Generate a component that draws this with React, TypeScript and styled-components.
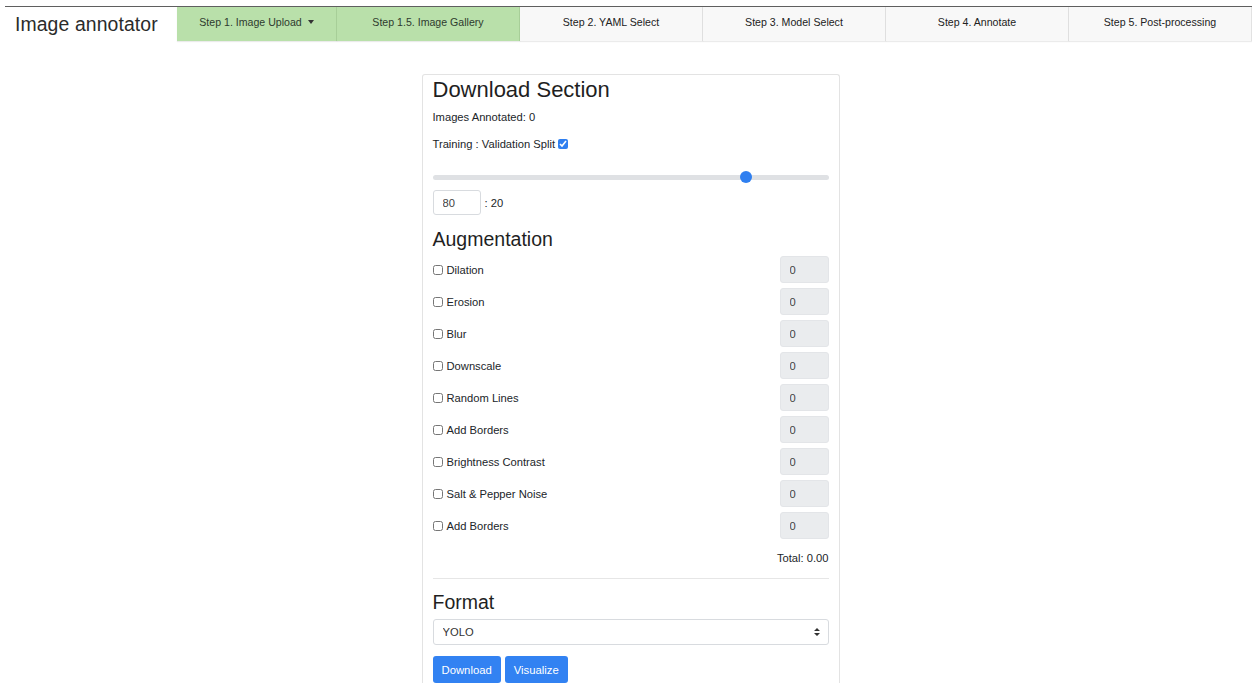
import React, { useState } from "react";
import styled, { createGlobalStyle } from "styled-components";

const GlobalStyle = createGlobalStyle`
  body {
    margin: 0;
    background: #ffffff;
    color: #212529;
    font-family: "Liberation Sans", Arial, sans-serif;
  }
  * { box-sizing: border-box; }
`;

const TopBar = styled.header`
  display: flex;
  align-items: stretch;
  margin: 6px 0 0 5px;
  border-top: 1px solid #5f5f5f;
  height: 35px;
`;

const Brand = styled.div`
  width: 172px;
  padding-left: 10px;
  display: flex;
  align-items: center;
  font-size: 19.4px;
  color: #2b2b2b;
  letter-spacing: 0.1px;
`;

const StepTab = styled.div<{ $done?: boolean; $first?: boolean }>`
  flex: ${({ $first }) => ($first ? "0 0 160px" : "1 1 0")};
  display: flex;
  align-items: center;
  justify-content: center;
  gap: 6px;
  padding-bottom: 4px;
  font-size: 10.6px;
  color: ${({ $done }) => ($done ? "#2e3a2e" : "#222")};
  background: ${({ $done }) => ($done ? "#b9e0aa" : "#f8f8f8")};
  border-right: 1px solid ${({ $done }) => ($done ? "#a9d19a" : "#e2e2e2")};
  box-shadow: 0 1px 1px rgba(0, 0, 0, 0.08);
`;

const Caret = styled.span`
  width: 0;
  height: 0;
  border-left: 3.5px solid transparent;
  border-right: 3.5px solid transparent;
  border-top: 4px solid #333;
`;

const Main = styled.main`
  display: flex;
  justify-content: center;
  padding: 33px 0 0 9px;
`;

const Card = styled.section`
  width: 418px;
  border: 1px solid #e3e3e3;
  border-bottom: none;
  border-radius: 3px 3px 0 0;
  padding: 2px 10px 0;
  display: flex;
  flex-direction: column;
`;

const Heading = styled.h3<{ $size: number; $gap: number }>`
  margin: ${({ $gap }) => $gap}px 0 0;
  font-size: ${({ $size }) => $size}px;
  line-height: 24px;
  font-weight: 500;
  color: #1f1f1f;
`;

const Line = styled.div<{ $gap: number }>`
  margin-top: ${({ $gap }) => $gap}px;
  font-size: 11.2px;
  line-height: 16px;
  display: flex;
  align-items: center;
  gap: 3px;
`;

const Check = styled.input.attrs({ type: "checkbox" })`
  width: 10px;
  height: 10px;
  margin: 0;
  accent-color: #2f7ff0;
`;

const Range = styled.input.attrs({ type: "range" })`
  -webkit-appearance: none;
  appearance: none;
  width: 100%;
  height: 12px;
  margin: 19px 0 0;
  background: transparent;

  &::-webkit-slider-runnable-track {
    height: 5px;
    border-radius: 3px;
    background: #dfe1e4;
  }
  &::-webkit-slider-thumb {
    -webkit-appearance: none;
    width: 12px;
    height: 12px;
    margin-top: -3.5px;
    border-radius: 50%;
    background: #2f7ff0;
    border: none;
  }
`;

const SplitRow = styled.div`
  margin-top: 7px;
  display: flex;
  align-items: center;
  gap: 4px;
  font-size: 11.2px;
`;

const NumberBox = styled.input<{ $muted?: boolean }>`
  width: ${({ $muted }) => ($muted ? 49 : 48)}px;
  height: ${({ $muted }) => ($muted ? 27 : 25)}px;
  padding: 0 9px;
  border: 1px solid ${({ $muted }) => ($muted ? "#e3e5e8" : "#d8dbdf")};
  border-radius: 3px;
  background: ${({ $muted }) => ($muted ? "#eaecee" : "#fff")};
  font: inherit;
  font-size: 11.2px;
  color: #444;
`;

const AugList = styled.div`
  margin-top: 5px;
  display: flex;
  flex-direction: column;
  gap: 5px;
`;

const AugRow = styled.label`
  display: flex;
  align-items: center;
  justify-content: space-between;
  height: 27px;
  font-size: 11.2px;
`;

const AugLabel = styled.span`
  display: flex;
  align-items: center;
  gap: 4px;
`;

const Total = styled.div`
  margin-top: 11px;
  line-height: 16px;
  font-size: 11.2px;
  text-align: right;
`;

const Rule = styled.hr`
  margin: 12px 0 0;
  border: none;
  border-top: 1px solid #e6e6e6;
`;

const SelectWrap = styled.div`
  position: relative;
  margin-top: 5px;
`;

const Select = styled.select`
  -webkit-appearance: none;
  appearance: none;
  width: 100%;
  height: 26px;
  padding: 0 9px;
  border: 1px solid #d8dbdf;
  border-radius: 3px;
  background: #fff;
  font: inherit;
  font-size: 11.2px;
  color: #333;
`;

const SelectArrow = styled.svg`
  position: absolute;
  right: 9px;
  top: 9px;
  pointer-events: none;
`;

const ButtonRow = styled.div`
  margin-top: 11px;
  display: flex;
  gap: 4px;
`;

const Button = styled.button`
  height: 27px;
  padding: 0 9px;
  border: none;
  border-radius: 3px;
  background: #3282f2;
  color: #fff;
  font: inherit;
  font-size: 11.3px;
`;

const steps = [
  { label: "Step 1. Image Upload", done: true, menu: true },
  { label: "Step 1.5. Image Gallery", done: true },
  { label: "Step 2. YAML Select" },
  { label: "Step 3. Model Select" },
  { label: "Step 4. Annotate" },
  { label: "Step 5. Post-processing" },
];

const augmentations = [
  "Dilation",
  "Erosion",
  "Blur",
  "Downscale",
  "Random Lines",
  "Add Borders",
  "Brightness Contrast",
  "Salt & Pepper Noise",
  "Add Borders",
];

export default function App() {
  const [split, setSplit] = useState(80);

  return (
    <>
      <GlobalStyle />
      <TopBar>
        <Brand>Image annotator</Brand>
        {steps.map((s, i) => (
          <StepTab key={s.label} $done={s.done} $first={i === 0}>
            {s.label}
            {s.menu && <Caret />}
          </StepTab>
        ))}
      </TopBar>
      <Main>
        <Card>
          <Heading $size={22} $gap={1}>Download Section</Heading>
          <Line $gap={7}>Images Annotated: 0</Line>
          <Line $gap={11}>
            Training : Validation Split <Check defaultChecked />
          </Line>
          <Range
            min={0}
            max={100}
            value={split}
            onChange={(e) => setSplit(Number(e.target.value))}
          />
          <SplitRow>
            <NumberBox value={split} onChange={(e) => setSplit(Number(e.target.value) || 0)} />
            <span>: {100 - split}</span>
          </SplitRow>

          <Heading $size={19.5} $gap={12}>Augmentation</Heading>
          <AugList>
            {augmentations.map((name, i) => (
              <AugRow key={i}>
                <AugLabel>
                  <Check />
                  {name}
                </AugLabel>
                <NumberBox $muted value="0" disabled readOnly />
              </AugRow>
            ))}
          </AugList>
          <Total>Total: 0.00</Total>
          <Rule />

          <Heading $size={19.5} $gap={11}>Format</Heading>
          <SelectWrap>
            <Select defaultValue="yolo">
              <option value="yolo">YOLO</option>
              <option value="coco">COCO</option>
            </Select>
            <SelectArrow width="6" height="8" viewBox="0 0 6 8">
              <path d="M3 0 L6 3 H0 Z M0 5 H6 L3 8 Z" fill="#333" />
            </SelectArrow>
          </SelectWrap>
          <ButtonRow>
            <Button>Download</Button>
            <Button>Visualize</Button>
          </ButtonRow>
        </Card>
      </Main>
    </>
  );
}
